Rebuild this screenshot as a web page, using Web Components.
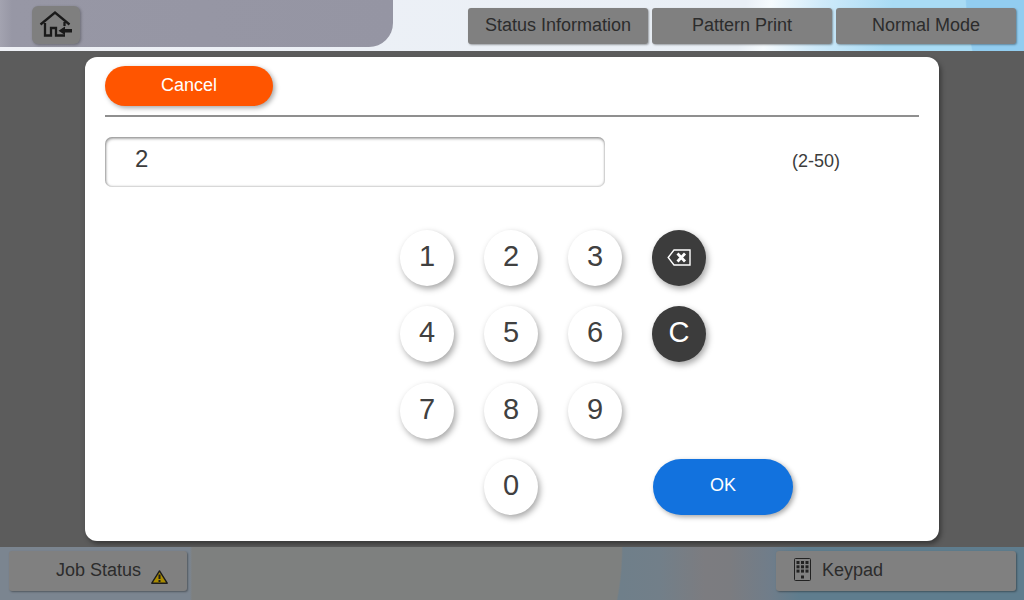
<!DOCTYPE html>
<html>
<head>
<meta charset="utf-8">
<style>
  html, body { margin: 0; height: 100%; overflow: hidden; }
  body { font-family: "Liberation Sans", Arial, sans-serif; }
</style>
</head>
<body>
<app-screen>
  <top-bar slot="top">
    <bar-button slot="right" style="width:180px">Status Information</bar-button>
    <bar-button slot="right" style="width:180px">Pattern Print</bar-button>
    <bar-button slot="right" style="width:180px">Normal Mode</bar-button>
  </top-bar>
  <number-dialog>
    <pill-button slot="cancel" color="#ff5500" style="width:168px;height:40px">Cancel</pill-button>
    <span slot="value">2</span>
    <span slot="range">(2-50)</span>
    <num-key>1</num-key>
    <num-key>2</num-key>
    <num-key>3</num-key>
    <num-key dark style="padding-top:1px">
      <svg width="24" height="17" viewBox="0 0 24 17">
        <path d="M1.2 8.5 L7 1 H23 V16 H7 Z" fill="none" stroke="#fff" stroke-width="1.4" stroke-linejoin="miter"/>
        <path d="M10.5 4.5 L18 12.5 M18 4.5 L10.5 12.5" fill="none" stroke="#fff" stroke-width="2.8"/>
      </svg>
    </num-key>
    <num-key style="grid-column:1">4</num-key>
    <num-key>5</num-key>
    <num-key>6</num-key>
    <num-key dark>C</num-key>
    <num-key style="grid-column:1">7</num-key>
    <num-key>8</num-key>
    <num-key>9</num-key>
    <num-key style="grid-row:4;grid-column:2">0</num-key>
    <pill-button color="#1272de" style="grid-row:4;grid-column:4 / span 2;height:56px;margin-left:1px">OK</pill-button>
  </number-dialog>
  <bottom-bar slot="bottom">
    <bar-button slot="left" style="width:178px" pad="47">Job Status
      <svg slot="after" width="17" height="14" viewBox="0 0 17 14" style="margin:14px 0 0 10px">
        <path d="M8.5 .9 L16.2 13.2 H.8 Z" fill="#a88a00" stroke="#1c1c1c" stroke-width="1.4" stroke-linejoin="round"/>
        <path d="M8.5 4.4 V9 M8.5 10 V11.9" stroke="#1c1c1c" stroke-width="2"/>
      </svg>
    </bar-button>
    <bar-button slot="right" style="width:240px" pad="18">
      <svg slot="before" width="18" height="24" viewBox="0 0 18 24" style="margin-right:10px">
        <rect x=".5" y=".5" width="16" height="22" rx="1" fill="none" stroke="#222"/>
        <g fill="#222">
          <rect x="2.5" y="3" width="3" height="3"/><rect x="7" y="3" width="3" height="3"/><rect x="11.5" y="3" width="3" height="3"/>
          <rect x="2.5" y="7.3" width="3" height="3"/><rect x="7" y="7.3" width="3" height="3"/><rect x="11.5" y="7.3" width="3" height="3"/>
          <rect x="2.5" y="11.6" width="3" height="3"/><rect x="7" y="11.6" width="3" height="3"/><rect x="11.5" y="11.6" width="3" height="3"/>
          <rect x="7" y="17.5" width="3" height="3"/>
        </g>
      </svg>
      Keypad
    </bar-button>
  </bottom-bar>
</app-screen>

<script>
class AppScreen extends HTMLElement {
  constructor() {
    super();
    this.attachShadow({ mode: 'open' });
    this.shadowRoot.innerHTML = `
      <style>
        :host { display: flex; flex-direction: column; width: 1024px; height: 600px; }
        main {
          height: 496px;
          background: #5c5c5c;
          display: flex;
          justify-content: center;
          padding-top: 6px;
          box-sizing: border-box;
        }
      </style>
      <slot name="top"></slot>
      <main><slot></slot></main>
      <slot name="bottom"></slot>
    `;
  }
}
customElements.define('app-screen', AppScreen);

class TopBar extends HTMLElement {
  constructor() {
    super();
    this.attachShadow({ mode: 'open' });
    this.shadowRoot.innerHTML = `
      <style>
        :host {
          display: flex;
          height: 51px;
          justify-content: space-between;
          background:
            radial-gradient(ellipse 140px 200px at 1105px -10px, #92cdf0 0 99%, transparent 100%),
            linear-gradient(100deg, #eff1f6 0, #e9eff6 735px, #f6fbfe 760px, #cfeafa 810px, #a9dcf5 880px, #a9dcf5 100%);
        }
        #panel {
          width: 393px;
          height: 47px;
          background: linear-gradient(90deg, #a3a3b0 0, #9797a5 12px, #9595a3 100%);
          border-bottom-right-radius: 24px;
          padding: 6px 0 0 32px;
          box-sizing: border-box;
        }
        #home {
          width: 48px;
          height: 38px;
          border-radius: 6px;
          background: #7f7f7f;
          box-shadow: 1px 1px 3px rgba(0,0,0,.3);
          display: flex;
          align-items: center;
          justify-content: center;
        }
        #right { display: flex; gap: 4px; padding: 8px 8px 0 0; }
      </style>
      <div id="panel">
        <div id="home">
          <svg width="34" height="28" viewBox="0 0 34 28">
            <path d="M1.5 13.5 L16 1.5 L30.5 13.5 M6 12 V24.5 H12 V17 H17 V24.5 H26 M25.5 11 V15" fill="none" stroke="#1a1a1a" stroke-width="2.3"/>
            <path d="M19.5 19.7 L26 15.5 V18 H33 V21.5 H26 V24 Z" fill="#1a1a1a"/>
          </svg>
        </div>
      </div>
      <div id="right"><slot name="right"></slot></div>
    `;
  }
}
customElements.define('top-bar', TopBar);

class BottomBar extends HTMLElement {
  constructor() {
    super();
    this.attachShadow({ mode: 'open' });
    this.shadowRoot.innerHTML = `
      <style>
        :host {
          display: flex;
          height: 53px;
          justify-content: space-between;
          padding: 4px 8px 0 9px;
          box-sizing: border-box;
          background:
            linear-gradient(90deg, #7b8590 0, #7b8590 190px, transparent 192px),
            radial-gradient(ellipse 323px 300px at 300px 0, #7e807f 0 99.5%, transparent 100%),
            linear-gradient(90deg, #6f7f8a 620px, #727f89 660px, #7c7c80 705px, #7b7c80 730px, #707d8a 770px, #5f7d8e 800px, #5f7d8e 100%);
        }
      </style>
      <slot name="left"></slot>
      <slot name="right"></slot>
    `;
  }
}
customElements.define('bottom-bar', BottomBar);

class BarButton extends HTMLElement {
  constructor() {
    super();
    this.attachShadow({ mode: 'open' });
    const pad = this.getAttribute('pad');
    this.shadowRoot.innerHTML = `
      <style>
        :host {
          display: flex;
          align-items: center;
          justify-content: ${pad ? 'flex-start' : 'center'};
          box-sizing: border-box;
          padding-left: ${pad || 0}px;
          padding-bottom: 2px;
          height: ${pad ? 40 : 36}px;
          background: #808080;
          border-radius: 3px;
          box-shadow: 1px 1px 2px rgba(0,0,0,.35);
          color: #2c2c2c;
          font-size: 18px;
          white-space: nowrap;
        }
      </style>
      <slot name="before"></slot><slot></slot><slot name="after"></slot>
    `;
  }
}
customElements.define('bar-button', BarButton);

class PillButton extends HTMLElement {
  constructor() {
    super();
    this.attachShadow({ mode: 'open' });
    this.shadowRoot.innerHTML = `
      <style>
        :host {
          display: flex;
          align-items: center;
          justify-content: center;
          padding-bottom: 2px;
          box-sizing: border-box;
          border-radius: 28px;
          background: ${this.getAttribute('color')};
          color: #fff;
          font-size: 18px;
          box-shadow: 2px 2px 5px rgba(0,0,0,.35);
        }
      </style>
      <slot></slot>
    `;
  }
}
customElements.define('pill-button', PillButton);

class NumKey extends HTMLElement {
  constructor() {
    super();
    this.attachShadow({ mode: 'open' });
    this.shadowRoot.innerHTML = `
      <style>
        :host {
          display: flex;
          align-items: center;
          justify-content: center;
          width: 54px;
          height: 56px;
          padding-bottom: 3px;
          box-sizing: border-box;
          border-radius: 50%;
          background: #fff;
          color: #404040;
          font-size: 29px;
          box-shadow: 2px 3px 6px rgba(0,0,0,.35);
        }
        :host([dark]) { background: #3c3c3c; color: #fff; }
      </style>
      <slot></slot>
    `;
  }
}
customElements.define('num-key', NumKey);

class NumberDialog extends HTMLElement {
  constructor() {
    super();
    this.attachShadow({ mode: 'open' });
    this.shadowRoot.innerHTML = `
      <style>
        :host {
          display: block;
          width: 854px;
          height: 484px;
          box-sizing: border-box;
          padding: 9px 20px 0;
          background: #fff;
          border-radius: 12px;
          box-shadow: 2px 3px 5px rgba(0,0,0,.4);
        }
        #head { display: flex; height: 40px; padding-bottom: 9px; border-bottom: 2px solid #8f8f8f; }
        #field { display: flex; align-items: center; margin-top: 20px; }
        #input {
          width: 500px;
          height: 50px;
          box-sizing: border-box;
          padding: 0 0 6px 30px;
          display: flex;
          align-items: center;
          border-radius: 7px;
          box-shadow: inset 1px 2px 3px rgba(0,0,0,.28), inset 0 0 2px 1px rgba(0,0,0,.2);
          font-size: 24px;
          color: #3c3c3c;
        }
        #range { margin-left: 187px; font-size: 18px; color: #3c3c3c; position: relative; top: -1px; }
        #keys {
          display: grid;
          grid-template-columns: 54px 54px 54px 54px 57px;
          grid-auto-rows: 56px;
          column-gap: 30px;
          row-gap: 20.33px;
          margin: 43px 0 0 295px;
          width: max-content;
        }
      </style>
      <div id="head"><slot name="cancel"></slot></div>
      <div id="field">
        <div id="input"><slot name="value"></slot></div>
        <div id="range"><slot name="range"></slot></div>
      </div>
      <div id="keys"><slot></slot></div>
    `;
  }
}
customElements.define('number-dialog', NumberDialog);
</script>
</body>
</html>
